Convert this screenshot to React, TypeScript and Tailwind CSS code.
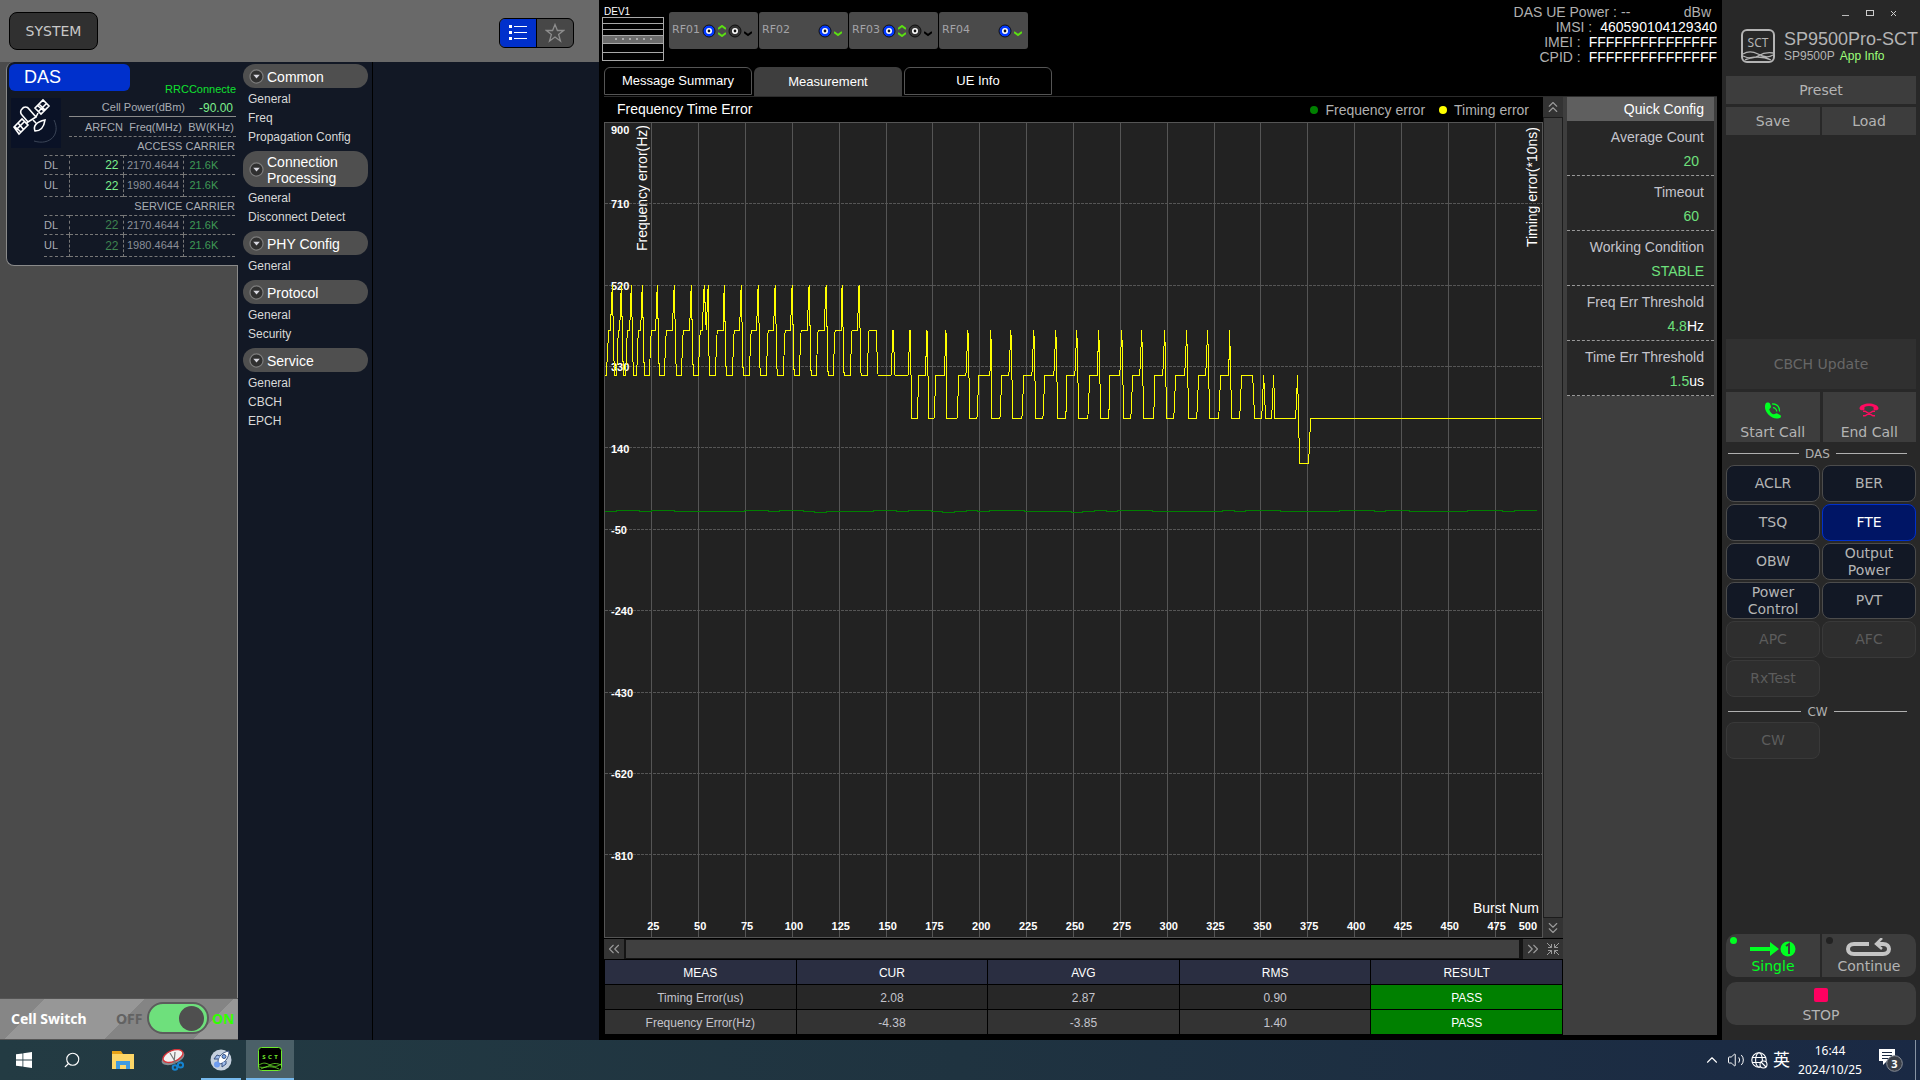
import { useState } from "react";
import type { ReactNode } from "react";
import {
  ChevronUp,
  ChevronsDown,
  ChevronsLeft,
  ChevronsRight,
  ChevronsUp,
  Search,
  Volume2,
} from "lucide-react";

const menu = [
  { title: "Common", items: ["General", "Freq", "Propagation Config"] },
  { title: "Connection Processing", items: ["General", "Disconnect Detect"] },
  { title: "PHY Config", items: ["General"] },
  { title: "Protocol", items: ["General", "Security"] },
  { title: "Service", items: ["General", "CBCH", "EPCH"] },
];

const carriers = [
  {
    name: "ACCESS CARRIER",
    color: "text-[#7df08c]",
    rows: [
      ["DL", "22", "2170.4644", "21.6K"],
      ["UL", "22", "1980.4644", "21.6K"],
    ],
  },
  {
    name: "SERVICE CARRIER",
    color: "text-[#3f8350]",
    rows: [
      ["DL", "22", "2170.4644", "21.6K"],
      ["UL", "22", "1980.4644", "21.6K"],
    ],
  },
];

const rfPorts = [
  { name: "RF01", dual: true },
  { name: "RF02", dual: false },
  { name: "RF03", dual: true },
  { name: "RF04", dual: false },
];

const deviceInfo = [
  ["IMSI", "460590104129340"],
  ["IMEI", "FFFFFFFFFFFFFFF"],
  ["CPID", "FFFFFFFFFFFFFFF"],
];

const results = [
  ["Timing Error(us)", "2.08", "2.87", "0.90", "PASS"],
  ["Frequency Error(Hz)", "-4.38", "-3.85", "1.40", "PASS"],
];

const dasButtons = [
  { label: "ACLR" },
  { label: "BER" },
  { label: "TSQ" },
  { label: "FTE" },
  { label: "OBW" },
  { label: "Output Power" },
  { label: "Power Control" },
  { label: "PVT" },
  { label: "APC", disabled: true },
  { label: "AFC", disabled: true },
  { label: "RxTest", disabled: true },
];

// Timing levels, in plot units from the top
const L5 = 486;
const L4 = 622;
const L3 = 757;
const L2 = 889;
const L1 = 1024;

// One burst cycle: rise from base, shoulder from/to, peak, back on base
const highCycles = [
  [19, 26, 31, 37, 43],
  [50, 55, 59, 64, 70],
  [77, 82, 89, 94, 100],
  [110, 115, 122, 127, 133],
  [148, 154, 167, 172, 178],
  [193, 199, 217, 223, 229],
  [244, 250, 269, 274, 280],
];
const highCycles2 = [
  [346, 352, 370, 373, 379],
  [397, 403, 419, 424, 430],
  [448, 454, 470, 475, 481],
  [499, 505, 521, 526, 532],
  [550, 556, 572, 577, 583],
  [598, 604, 622, 628, 634],
  [649, 655, 673, 679, 685],
  [700, 706, 724, 727, 733],
  [751, 757, 773, 778, 784],
];
const lowCycles = [
  [952, 958, 977, 982, 988],
  [1003, 1009, 1034, 1039, 1042],
  [1072, 1078, 1099, 1105, 1111],
  [1132, 1138, 1171, 1174, 1177],
  [1201, 1207, 1228, 1234, 1240],
  [1267, 1273, 1297, 1303, 1309],
  [1330, 1336, 1363, 1369, 1375],
  [1399, 1402, 1426, 1432, 1438],
  [1465, 1471, 1493, 1498, 1504],
  [1528, 1531, 1561, 1567, 1573],
  [1594, 1600, 1621, 1627, 1633],
  [1663, 1666, 1690, 1696, 1702],
  [1723, 1729, 1756, 1762, 1768],
  [1792, 1798, 1819, 1825, 1831],
  [1858, 1864, 1888, 1891, 1897],
];

const cycle = (base: number, shoulder: number, peak: number) => (c: number[]) =>
  `${c[0]},${base} ${c[1]},${shoulder} ${c[2]},${shoulder} ${c[3]},${peak} ${c[4]},${base}`;

const timingPoints = [
  `15,${L3}`,
  ...highCycles.map(cycle(L3, L4, L5)),
  `295,${L3} 301,${L4} 307,${L4} 313,${L5} 319,${L4} 325,${L5} 328,${L3}`,
  ...highCycles2.map(cycle(L3, L4, L5)),
  `802,${L3} 808,${L4} 829,${L4} 835,${L3}`,
  `874,${L3} 880,${L4} 886,${L3} 925,${L3} 931,${L4} 937,${L2}`,
  ...lowCycles.map(cycle(L2, L3, L4)),
  `1921,${L2} 1927,${L3} 1960,${L3} 1966,${L2}`,
  `1987,${L2} 1993,${L3} 1999,${L2} 2017,${L2} 2023,${L3} 2027,${L2}`,
  `2089,${L2} 2095,${L3} 2101,${L1} 2128,${L1} 2134,${L2} 2826,${L2}`,
].join(" ");

// Frequency error moves in single steps around one level
const frequencyPath = Array.from({ length: 80 }, (_, i) => {
  const wobble = Math.sin(i * 1.7) + Math.sin(i * 0.6);
  const y = wobble > 0.3 ? 1164 : wobble < -1.7 ? 1170 : 1167;
  return `${i === 0 ? "M" : "L"}${15 + i * 35} ${y}H${15 + (i + 1) * 35}`;
}).join("");

const yLabels = [900, 710, 520, 330, 140, -50, -240, -430, -620, -810];
const xLabels = Array.from({ length: 19 }, (_, i) => (i + 1) * 25);

function SctLogo({ className }: { className?: string }) {
  return (
    <svg viewBox="0 0 34 34" fill="none" stroke="currentColor" className={className}>
      <rect x="1" y="1" width="32" height="32" rx="5" strokeWidth="2" />
      <path d="M2 25c5-3 9-3 15 0s10 4 15 1M2 27c6 3 10 3 15 0s9-4 15-3M4 31c7-4 18-4 26 0" strokeWidth="1.3" />
      <text x="17" y="18" textAnchor="middle" fontSize="12" fontFamily="Noto Sans, sans-serif" fill="currentColor" stroke="none">
        SCT
      </text>
    </svg>
  );
}

function Satellite() {
  return (
    <svg viewBox="0 0 50 50" fill="none" stroke="#fff" strokeWidth="1.6" className="h-[50px] w-[50px] bg-[#0a1226]">
      <path d="M24 10l8-8 6 6-8 8zM28 6l6 6M32 10l-4-4M36 5l-8 8M27 8l6 5" />
      <path d="M3 29l8-8 6 6-9 9zM7 25l6 7M5 32l9-9M10 34L3 28" />
      <path d="M17 24l-6-7a4 4 0 0 1 0-6 4 4 0 0 1 7 0l7 8zM25 19l2-4M17 24l-2 2" />
      <path d="M24 33c-2-5 1-9 10-11-1 7-4 11-10 11zM25 25l-3-3" />
      <path d="M43 22c7 14-4 26-20 21" stroke="#3b4557" strokeWidth="1" />
    </svg>
  );
}

function Port({ active }: { active?: boolean }) {
  return (
    <svg viewBox="0 0 14 14" className="-mx-px h-[14px] w-[14px]">
      <circle cx="7" cy="7" r="6" fill={active ? "#0038ff" : "#333"} stroke="#111" strokeWidth="1" />
      <circle cx="7" cy="7" r="2.2" fill="#111" stroke="#fff" strokeWidth="1.6" />
    </svg>
  );
}

function DownMark({ className }: { className: string }) {
  return (
    <svg viewBox="0 0 8 6" className={`h-[6px] w-2 ${className}`} fill="none" stroke="currentColor" strokeWidth="2">
      <path d="M0 1l4 3 4-3" />
    </svg>
  );
}

function UpDownMark() {
  return (
    <svg viewBox="0 0 8 12" className="h-3 w-2 text-[#5be012]" fill="none" stroke="currentColor" strokeWidth="2">
      <path d="M0 4l4-3 4 3M0 8l4 3 4-3" />
    </svg>
  );
}

function RackIcon() {
  return (
    <svg viewBox="0 0 62 44" className="h-[44px] w-[62px]" shapeRendering="crispEdges">
      <rect x="0.5" y="0.5" width="61" height="43" fill="#000" stroke="#a8a8a8" />
      <path d="M1 6.5h60M1 12.5h60M1 26.5h60M1 35.5h60" stroke="#a8a8a8" />
      <rect x="1" y="18" width="60" height="8" fill="#6b6b6b" />
      <path d="M1 18.5h60" stroke="#a8a8a8" />
      <path d="M13 22h2M20 22h2M27 22h2M34 22h2M41 22h2M48 22h2" stroke="#aaa" strokeWidth="2" />
    </svg>
  );
}

function DasCard() {
  return (
    <section className="ml-[6px] rounded-l-lg border-b border-l border-[#8a8a8a] bg-[#121825] pb-[8px] pt-[2px] text-[11px] text-[#a9adb4]">
      <div className="grid grid-cols-[62px_1fr]">
        <button className="col-span-2 ml-[2px] h-[27px] w-[121px] rounded-md bg-[#0030cc] pl-[15px] text-left text-[18px] text-white">
          DAS
        </button>
        <div className="pl-1 pt-[7px]">
          <Satellite />
        </div>
        <div className="-mt-[9px] pr-[2px]">
          <p className="h-[17px] overflow-hidden whitespace-nowrap text-right leading-[14px] text-[#10e030]">RRCConnecte</p>
          <p className="flex h-[18px] items-center justify-end gap-[14px] border-b border-[#8a8a8a] pr-[3px]">
            <span>Cell Power(dBm)</span>
            <span className="text-[12px] text-[#7df08c]">-90.00</span>
          </p>
          <p className="mt-[2px] flex h-[18px] items-center justify-between border-b border-dashed border-[#777] pl-4 pr-[2px]">
            <span>ARFCN</span>
            <span>Freq(MHz)</span>
            <span>BW(KHz)</span>
          </p>
        </div>
      </div>
      {carriers.map((c) => (
        <table key={c.name} className="-mt-px ml-[37px] w-[191px] table-fixed border-collapse first-of-type:-mt-[12px]">
          <caption className="h-[19px] text-right leading-[21px]">{c.name}</caption>
          <colgroup>
            <col className="w-[25px]" />
            <col className="w-[54px]" />
            <col className="w-[60px]" />
            <col />
          </colgroup>
          <tbody>
            {c.rows.map((r) => (
              <tr key={r[0]} className="h-[19px] border-y border-dashed border-[#777] last:h-[22px]">
                <th scope="row" className="text-left font-normal">{r[0]}</th>
                <td className={`border-l border-dashed border-[#777] pr-1 text-right text-[12px] ${c.color}`}>{r[1]}</td>
                <td className="border-x border-dashed border-[#777] text-center text-[#8b8f98]">{r[2]}</td>
                <td className="pl-[6px] text-[#3f9a55]">{r[3]}</td>
              </tr>
            ))}
          </tbody>
        </table>
      ))}
    </section>
  );
}

function CellSwitch() {
  const [on, setOn] = useState(true);
  return (
    <label className="flex h-[42px] cursor-pointer items-center border-y border-[#555] bg-[linear-gradient(135deg,#868686_0_16%,#979797_16%_52%,#848484_52%_84%,#979797_84%)] pb-[2px] pl-[11px] font-['Noto_Sans',sans-serif] text-[14px] font-bold">
      <span className="w-[105px] text-white">Cell Switch</span>
      <span className="w-[31px] text-[#626262]">OFF</span>
      <input type="checkbox" className="peer sr-only" checked={on} onChange={() => setOn(!on)} />
      <span className={`flex h-[32px] w-[62px] items-center rounded-full border-2 border-[#5c5c5c] px-[3px] ${on ? "justify-end bg-[#6ee07c]" : "bg-[#777]"}`}>
        <span className="h-[25px] w-[25px] rounded-full bg-[#4f4f4f]" />
      </span>
      <span className="ml-[3px] text-[#30ff00]">ON</span>
    </label>
  );
}

function LeftPanel() {
  return (
    <aside className="flex w-[599px] shrink-0 flex-col bg-[#121825]">
      <header className="flex h-[62px] shrink-0 items-center justify-between bg-[#696969] pl-[9px] pr-[25px]">
        <button className="h-[38px] w-[89px] rounded-lg border border-black bg-[#303030] font-['DejaVu_Sans',sans-serif] text-[14px] text-[#c8c8c8]">
          SYSTEM
        </button>
        <div className="mt-1 flex h-[30px] w-[75px] overflow-hidden rounded-md border border-black bg-[#474747]">
          <button aria-label="List view" className="flex w-[37px] items-center justify-center border-r border-black bg-[#0030cc]">
            <svg viewBox="0 0 18 16" className="h-4 w-[18px]" fill="#fff" shapeRendering="crispEdges">
              <path d="M0 0h3v3H0zM0 6h3v3H0zM0 12h3v3H0zM5 1h13v1H5zM5 7h13v1H5zM5 13h13v1H5z" />
            </svg>
          </button>
          <button aria-label="Favorites" className="flex flex-1 items-center justify-center">
            <svg viewBox="0 0 20 20" className="h-5 w-5" fill="none" stroke="#8c8c8c" strokeWidth="1.3">
              <path d="M10 1.500l2.400 6h6.100l-4.900 3.900 1.900 6.600-5.500-4-5.500 4 1.900-6.600L1.500 7.500h6.100z" />
            </svg>
          </button>
        </div>
      </header>
      <div className="flex flex-1">
        <div className="flex w-[238px] flex-col bg-[#4b4b4b]">
          <DasCard />
          <div className="flex-1 border-r border-[#8a8a8a]" />
          <CellSwitch />
        </div>
        <nav className="w-[135px] border-r border-black pl-[5px] pr-[4px] pt-[2px]">
          {menu.map((group) => (
            <section key={group.title} className="mb-[4px]">
              <button className="flex min-h-6 w-[125px] items-center gap-[3px] rounded-[14px] bg-[#4f4f4f] pb-px pl-[6px] pt-[3px] text-left text-[14px] leading-[16px] text-white">
                <svg viewBox="0 0 16 16" className="-mt-[2px] h-[15px] w-[15px] shrink-0">
                  <circle cx="8" cy="8" r="7" fill="#303030" stroke="#7c7c7c" strokeWidth="1.300" />
                  <path d="M4.500 6h7L8 10z" fill="#d8d8e0" />
                </svg>
                <span>{group.title}</span>
              </button>
              <ul className="pl-[5px] pt-[2px] text-[12px] leading-[19px] text-[#d8d8d8]">
                {group.items.map((item) => (
                  <li key={item}>
                    <a href="#">{item}</a>
                  </li>
                ))}
              </ul>
            </section>
          ))}
        </nav>
      </div>
    </aside>
  );
}

function Chart() {
  return (
    <div className="relative min-h-0 flex-1 border border-[#555] bg-[#222]">
      <svg viewBox="15 0 2814 2445" preserveAspectRatio="none" className="absolute h-full w-full" fill="none" shapeRendering="crispEdges">
        {Array.from({ length: 19 }, (_, i) => (
          <path key={i} d={`M${15 + (i + 1) * 140.700} 0V2445`} stroke="#555" vectorEffect="non-scaling-stroke" />
        ))}
        {Array.from({ length: 9 }, (_, i) => (
          <path key={i} d={`M15 ${(i + 1) * 244.500 - 2}H2829`} stroke="#555" strokeDasharray="3 1" vectorEffect="non-scaling-stroke" />
        ))}
        <path d={frequencyPath} stroke="#008000" vectorEffect="non-scaling-stroke" />
      </svg>
      <div className="absolute inset-0 text-[11px] font-bold leading-[12px] text-white">
        {yLabels.map((v, i) => (
          <span key={v} className="absolute left-[6px] -translate-y-1/2 first:translate-y-px" style={{ top: `${i * 10}%` }}>
            {v}
          </span>
        ))}
        {xLabels.map((v) => (
          <span key={v} className="absolute bottom-[5px] -translate-x-1/2 pl-[3px]" style={{ left: `${v / 5}%` }}>
            {v}
          </span>
        ))}
        <span className="absolute bottom-[5px] right-[5px]">500</span>
      </div>
      <svg viewBox="15 0 2814 2445" preserveAspectRatio="none" className="absolute h-full w-full" fill="none" shapeRendering="crispEdges">
        <polyline points={timingPoints} stroke="#ffff00" vectorEffect="non-scaling-stroke" />
      </svg>
      <div className="absolute inset-0 text-[14px] leading-4 text-white">
        <span className="absolute left-[29px] top-[2px] rotate-180 [writing-mode:vertical-rl]">Frequency error(Hz)</span>
        <span className="absolute right-[2px] top-[4px] rotate-180 [writing-mode:vertical-rl]">Timing error(*10ns)</span>
        <span className="absolute bottom-[21px] right-[3px]">Burst Num</span>
      </div>
    </div>
  );
}

function ScrollButton({ label, children }: { label: string; children: ReactNode }) {
  return (
    <button aria-label={label} className="flex h-5 w-5 shrink-0 items-center justify-center bg-[#333] text-[#9a9a9a]">
      {children}
    </button>
  );
}

function QuickConfig() {
  const row = "flex h-[55px] flex-col items-end border-b border-dashed border-[#999] pr-[10px] pt-[8px] leading-4";
  const field = "w-16 bg-transparent text-right text-[#6ee07c] outline-none";
  return (
    <form className="ml-[4px] mr-[3px] w-[147px] self-start bg-[#272727] text-[14px] text-[#c4c4cc]">
      <h2 className="h-6 bg-[#5f5f5f] pr-[10px] text-right leading-6 text-white">Quick Config</h2>
      <div className={row}>
        <label htmlFor="avg">Average Count</label>
        <input id="avg" className={`${field} mt-2 pr-[5px]`} defaultValue="20" />
      </div>
      <div className={row}>
        <label htmlFor="timeout">Timeout</label>
        <input id="timeout" className={`${field} mt-2 pr-[5px]`} defaultValue="60" />
      </div>
      <div className={row}>
        <label htmlFor="cond">Working Condition</label>
        <select id="cond" className="mt-2 appearance-none bg-transparent text-right text-[#6ee07c]">
          <option>STABLE</option>
        </select>
      </div>
      <div className={row}>
        <label htmlFor="freq">Freq Err Threshold</label>
        <div className="mt-2 flex text-white">
          <input id="freq" className={field} defaultValue="4.8" />
          <span>Hz</span>
        </div>
      </div>
      <div className={row}>
        <label htmlFor="time">Time Err Threshold</label>
        <div className="mt-2 flex text-white">
          <input id="time" className={field} defaultValue="1.5" />
          <span>us</span>
        </div>
      </div>
    </form>
  );
}

function CenterPanel() {
  const [tab, setTab] = useState("Measurement");
  return (
    <main className="flex min-w-0 flex-1 flex-col bg-black pb-[5px] pl-[5px] pr-[5px]">
      <div className="flex h-[67px] shrink-0 justify-between">
        <div className="flex">
          <div className="-ml-[2px] w-[67px] pt-[6px]">
            <p className="pl-[2px] text-[10px] leading-[11px] text-white">DEV1</p>
            <RackIcon />
          </div>
          <div className="mt-3 flex gap-px">
            {rfPorts.map((p) => (
              <button key={p.name} className="flex h-[37px] w-[89px] items-center justify-between rounded-[3px] bg-[#4a4a4a] pl-[3px] pr-[6px] font-['DejaVu_Sans',sans-serif] text-[11px] text-[#a4a4a8]">
                <span>{p.name}</span>
                <span className="flex items-center gap-[3px]">
                  <Port active />
                  {p.dual && <UpDownMark />}
                  {p.dual && <Port />}
                  <DownMark className={p.dual ? "mt-[6px] text-black" : "mt-[6px] text-[#5be012]"} />
                </span>
              </button>
            ))}
          </div>
        </div>
        <dl className="pt-[5px] text-right text-[14px] leading-[15px] text-[#b0b0b0]">
          <div className="flex justify-end gap-1 pr-[6px]">
            <dt>DAS UE Power :</dt>
            <dd className="flex w-[90px] justify-between">
              <span>--</span>
              <span>dBw</span>
            </dd>
          </div>
          {deviceInfo.map(([k, v]) => (
            <div key={k} className="flex justify-end gap-2">
              <dt>{k} :</dt>
              <dd className="text-white">{v}</dd>
            </div>
          ))}
        </dl>
      </div>
      <div role="tablist" className="flex h-[29px] shrink-0 gap-[2px] text-[13px] text-white">
        {["Message Summary", "Measurement", "UE Info"].map((t) => (
          <button
            key={t}
            role="tab"
            aria-selected={tab === t}
            onClick={() => setTab(t)}
            className={`w-[148px] rounded-t-md ${tab === t ? "bg-[#3e3e3e]" : "mb-px border border-[#555]"}`}
          >
            {t}
          </button>
        ))}
      </div>
      <div className="flex min-h-0 flex-1 border-t border-[#2c2c2c]">
        <div className="flex min-w-0 flex-1 flex-col">
          <div className="flex min-h-0 flex-1">
            <div className="flex min-w-0 flex-1 flex-col">
              <div className="flex h-[25px] shrink-0 items-center justify-between pl-[13px] pr-[14px] text-[14px]">
                <h1 className="text-white">Frequency Time Error</h1>
                <ul className="flex gap-[14px] pt-px text-[#b0b0b0]">
                  <li className="flex items-center gap-[7px]">
                    <span className="h-2 w-2 rounded-full bg-[#008000]" />
                    Frequency error
                  </li>
                  <li className="flex items-center gap-[7px]">
                    <span className="h-2 w-2 rounded-full bg-[#ffff00]" />
                    Timing error
                  </li>
                </ul>
              </div>
              <Chart />
            </div>
            <div className="flex w-5 flex-col gap-px bg-[#1c1c1c]">
              <ScrollButton label="Scroll up">
                <ChevronsUp size={18} strokeWidth={1.5} />
              </ScrollButton>
              <div className="mx-px flex-1 bg-[#404040]" />
              <ScrollButton label="Scroll down">
                <ChevronsDown size={18} strokeWidth={1.5} />
              </ScrollButton>
            </div>
          </div>
          <div className="mt-px flex h-5 shrink-0 gap-[2px] bg-[#141414]">
            <ScrollButton label="Scroll left">
              <ChevronsLeft size={18} strokeWidth={1.5} />
            </ScrollButton>
            <div className="my-px mr-[2px] flex-1 bg-[#404040]" />
            <div className="flex">
              <ScrollButton label="Scroll right">
                <ChevronsRight size={18} strokeWidth={1.5} />
              </ScrollButton>
              <ScrollButton label="Fit to view">
                <svg viewBox="0 0 12 12" className="h-3 w-3" fill="none" stroke="currentColor">
                  <path d="M0 0l4.500 4.500V1M4.500 4.500H1M12 0L7.500 4.500V1M7.500 4.500H11M0 12l4.500-4.500V11M4.500 7.500H1M12 12L7.500 7.500V11M7.500 7.500H11" />
                </svg>
              </ScrollButton>
            </div>
          </div>
          <table className="w-full shrink-0 table-fixed border-separate border-spacing-px bg-black text-center text-[12px]">
            <thead>
              <tr className="h-6 bg-[#2a2e41] text-white">
                {["MEAS", "CUR", "AVG", "RMS", "RESULT"].map((h) => (
                  <th key={h} scope="col" className="pt-px font-normal">{h}</th>
                ))}
              </tr>
            </thead>
            <tbody>
              {results.map((r) => (
                <tr key={r[0]} className="h-6 bg-[#272727] text-[#c4c4cc] last:bg-[#333]">
                  {r.map((v, i) => (
                    <td key={i} className={i === 4 ? "bg-[#008000] pt-px text-white" : "pt-px"}>{v}</td>
                  ))}
                </tr>
              ))}
            </tbody>
          </table>
        </div>
        <div className="flex w-[154px] shrink-0 bg-[#3e3e3e]">
          <QuickConfig />
        </div>
      </div>
    </main>
  );
}

function Divider({ label }: { label: string }) {
  return (
    <div className="flex h-[22px] items-center gap-[6px] pl-[2px] pr-[9px] text-[12px] text-[#b0b0b0]">
      <span className="h-px flex-1 bg-[#b0b0b0]" />
      <span className="pt-px">{label}</span>
      <span className="h-px flex-1 bg-[#b0b0b0]" />
    </div>
  );
}

function RightPanel() {
  const [mode, setMode] = useState("FTE");
  return (
    <aside className="flex w-[198px] shrink-0 flex-col bg-[#282828] px-[4px] pb-[15px] font-['DejaVu_Sans',sans-serif] text-[14px] text-[#b4b4b4]">
      <div className="flex h-[26px] items-center justify-end gap-[17px] pr-[20px]">
        <button aria-label="Minimize" className="mt-[5px] h-px w-[7px] bg-[#bbb]" />
        <button aria-label="Maximize" className="h-[6px] w-[8px] border border-[#ccc]" />
        <button aria-label="Close">
          <svg viewBox="0 0 5 5" className="h-[5px] w-[5px]" stroke="#ccc">
            <path d="M0 0l5 5M5 0L0 5" />
          </svg>
        </button>
      </div>
      <div className="flex h-[50px] gap-[9px] whitespace-nowrap pl-[15px] pt-[3px] font-['Liberation_Sans',Arial,sans-serif]">
        <SctLogo className="h-[34px] w-[34px] shrink-0" />
        <div>
          <p className="text-[18px] leading-5">SP9500Pro-SCT</p>
          <p className="flex gap-[5px] text-[12px] leading-[14px]">
            SP9500P <a href="#" className="text-[#9dff7a]">App Info</a>
          </p>
        </div>
      </div>
      <div className="grid grid-cols-2 gap-x-[2px] gap-y-[3px]">
        <button className="col-span-2 h-7 bg-[#3d3d3d]">Preset</button>
        <button className="h-7 bg-[#3d3d3d]">Save</button>
        <button className="h-7 bg-[#3d3d3d]">Load</button>
      </div>
      <div className="mt-[204px] grid grid-cols-2 gap-x-[3px] gap-y-[3px]">
        <button disabled className="col-span-2 h-[50px] bg-[#303030] text-[#676767]">CBCH Update</button>
        <button className="flex h-[50px] flex-col items-center justify-end gap-[3px] bg-[#3d3d3d] leading-[20px]">
          <svg viewBox="0 0 18 18" className="h-[17px] w-[18px]" fill="#0f2">
            <path d="M1 2c1-2 4-2 5 0l1 3c0 1-2 2-2 3 1 3 3 5 5 5 1 0 2-1 3-1l4 2c1 1 0 3-1 3C8 20-2 10 1 2z" />
            <path d="M9 6c2 0 4 2 4 4M8 2c5 0 8 3 8 8" fill="none" stroke="#0f2" strokeWidth="1.3" />
          </svg>
          Start Call
        </button>
        <button className="flex h-[50px] flex-col items-center justify-end gap-[3px] bg-[#3d3d3d] leading-[20px]">
          <svg viewBox="0 0 20 17" className="h-[17px] w-5" fill="#ff0a60">
            <path d="M0.500 6C2 0 18 0 19.500 6c0.500 2.500-4.500 3-5 1.200V5C12 3.800 8 3.800 5.500 5v2.200C5 9 0 8.500 0.500 6z" />
            <path d="M4 9.200h2l8 4.600h2M16 9.200h-2l-8 4.600H4" fill="none" stroke="#ff0a60" strokeWidth="1.5" />
          </svg>
          End Call
        </button>
      </div>
      <Divider label="DAS" />
      <div className="mt-px grid grid-cols-2 gap-[2px]">
        {dasButtons.map((b) => (
          <button
            key={b.label}
            disabled={b.disabled}
            onClick={() => setMode(b.label)}
            className={`h-[37px] rounded-lg border px-3 leading-[17px] ${
              b.disabled
                ? "border-[#393939] bg-[#2e2e2e] text-[#5c5c5c]"
                : mode === b.label
                  ? "border-[#0030cc] bg-[#001565] text-white"
                  : "border-[#4c4c4c] bg-[#121825]"
            }`}
          >
            {b.label}
          </button>
        ))}
      </div>
      <div className="mt-[3px]">
        <Divider label="CW" />
        <div className="grid grid-cols-2 gap-[2px]">
          <button disabled className="h-[37px] rounded-lg border border-[#393939] bg-[#2e2e2e] text-[#5c5c5c]">CW</button>
        </div>
      </div>
      <div className="mt-auto grid grid-cols-2 gap-x-[2px] gap-y-[5px]">
        <button className="relative flex h-[43px] flex-col items-center rounded-l-[10px] bg-[#3d3d3d] pt-[7px] leading-[19px] text-[#0f2]">
          <span className="absolute left-1 top-[3px] h-[7px] w-[7px] rounded-full bg-[#0f2]" />
          <svg viewBox="0 0 46 16" className="h-4 w-[46px] shrink-0" fill="currentColor">
            <path d="M0 6h20V1l9 7-9 7v-5H0z" />
            <circle cx="38" cy="8" r="7.500" />
            <path d="M36 5l3-2v10" stroke="#3d3d3d" strokeWidth="2" fill="none" />
          </svg>
          Single
        </button>
        <button className="relative flex h-[43px] flex-col items-center rounded-r-[10px] bg-[#3d3d3d] pt-[4px] leading-[19px]">
          <span className="absolute left-1 top-[3px] h-[7px] w-[7px] rounded-full bg-[#222]" />
          <svg viewBox="0 0 46 19" className="h-[19px] w-[46px] shrink-0" fill="none" stroke="#c4c4c4" strokeWidth="4">
            <path d="M23 6H8c-8 0-8 10 0 10h29c8 0 8-10 0-10h-5" />
            <path d="M36 0l-6 6 6 5" strokeWidth="2.500" />
          </svg>
          Continue
        </button>
        <button className="col-span-2 flex h-[43px] flex-col items-center rounded-[10px] bg-[#3d3d3d] pt-[6px]">
          <span className="h-[14px] w-[14px] rounded-[2px] bg-[#ff0060]" />
          <span className="mt-1 leading-[18px]">STOP</span>
        </button>
      </div>
    </aside>
  );
}

function Taskbar() {
  return (
    <footer className="flex h-10 shrink-0 items-center justify-between bg-[linear-gradient(90deg,#233b43,#1f3340_50%,#1a2944)] font-['Noto_Sans','Noto_Sans_CJK_SC',sans-serif] text-[12px] text-white">
      <div className="flex h-full items-center">
        <button aria-label="Start" className="flex h-full w-12 items-center justify-center">
          <svg viewBox="0 0 16 16" className="h-4 w-4" fill="#fff">
            <path d="M0 2.300L6.500 1.400v6.200H0zM7.300 1.300L16 0v7.600H7.300zM0 8.400h6.500v6.200L0 13.700zM7.300 8.400H16V16l-8.700-1.300z" />
          </svg>
        </button>
        <button aria-label="Search" className="flex h-full w-12 items-center justify-center">
          <Search size={18} strokeWidth={1.5} className="-scale-x-100" />
        </button>
        <button aria-label="Files" className="flex h-full w-[54px] items-center justify-center">
          <svg viewBox="0 0 22 19" className="h-[19px] w-[22px]">
            <path d="M0 0h9l2 3h11v15H0z" fill="#e8a317" />
            <path d="M0 3h22v15H0z" fill="#fdd667" />
            <path d="M4 18v-8h14v8h-4v-4H8v4z" fill="#3f9be0" />
          </svg>
        </button>
        <button aria-label="Snip" className="flex h-full w-[46px] items-center justify-center">
          <svg viewBox="0 0 24 22" className="h-[22px] w-6">
            <ellipse cx="12" cy="9" rx="12" ry="6" fill="#8a8f94" transform="rotate(-22 12 9)" />
            <ellipse cx="12" cy="7" rx="10.500" ry="5.500" fill="#f2f2f2" stroke="#d8343a" strokeWidth="1.400" transform="rotate(-22 12 7)" />
            <path d="M9 4l6 10M14 3l-1 12" stroke="#777" strokeWidth="1.200" />
            <circle cx="14" cy="18.500" r="2.300" fill="none" stroke="#1583d0" strokeWidth="2" />
            <circle cx="19.500" cy="16" r="2.600" fill="none" stroke="#1583d0" strokeWidth="2" />
          </svg>
        </button>
        <button aria-label="Launcher" className="ml-[5px] flex h-full w-10 items-center justify-center border-b-2 border-[#76b9ed]">
          <svg viewBox="0 0 22 22" className="mt-[2px] h-[22px] w-[22px]">
            <circle cx="11" cy="11" r="10.500" fill="#c5d0de" />
            <path d="M8 13C8 7 13 3 19 2c0 6-3 11-9 13z" fill="#fff" stroke="#39517e" />
            <circle cx="14" cy="7.500" r="2" fill="#7da6e8" stroke="#39517e" />
            <path d="M8 10H4l3-4 3 1M12 14v4l4-3v-3" fill="#9ebcec" stroke="#39517e" />
            <circle cx="7" cy="15.500" r="3" fill="#6f9cf0" />
          </svg>
        </button>
        <button aria-label="SCT" className="ml-[5px] flex h-full w-12 items-center justify-center border-b-2 border-[#76b9ed] bg-[#4b6068]">
          <svg viewBox="0 0 24 24" className="h-6 w-6" fill="none" stroke="#6fea2c">
            <rect x="0.500" y="0.500" width="23" height="23" rx="3" fill="#000" />
            <path d="M1 18c5-3 7-2 11 0s7 2 11-1M1 20c5 1 8 0 11-2s7-2 11 0M3 22c5-3 12-3 18 0" strokeWidth="0.800" />
            <g fontSize="6" fontWeight="bold" fill="#6fea2c" stroke="none" textAnchor="middle">
              <text x="6" y="12">S</text>
              <text x="12" y="12">C</text>
              <text x="18" y="12">T</text>
            </g>
          </svg>
        </button>
      </div>
      <div className="flex h-full items-center">
        <ChevronUp size={18} strokeWidth={1.5} className="mr-[6px]" />
        <Volume2 size={18} strokeWidth={1.3} className="mr-[6px]" />
        <svg viewBox="0 0 17 17" className="mr-[5px] h-[17px] w-[17px]" fill="none" stroke="#fff" strokeWidth="1.100">
          <circle cx="8" cy="8" r="7.200" />
          <ellipse cx="8" cy="8" rx="3.400" ry="7.200" />
          <path d="M1 5.500h14M1 10.500h14" />
          <circle cx="12.500" cy="12.500" r="3.500" fill="#1b2b43" />
          <path d="M10 10l5 5" />
        </svg>
        <span className="mr-[5px] text-[17px]">英</span>
        <time className="mr-[14px] w-[70px] text-center leading-[19px]">
          16:44
          <br />
          2024/10/25
        </time>
        <button aria-label="Notifications" className="mr-3">
          <svg viewBox="0 0 24 24" className="h-6 w-6">
            <path d="M0 1h16v12H8l-4 4v-4H0z" fill="#fff" />
            <path d="M3 4.500h10M3 7.500h10M3 10.500h7" stroke="#1b2b43" />
            <circle cx="15.500" cy="15.500" r="7.800" fill="#3a3f48" stroke="#8a8f98" />
            <text x="15.500" y="19.500" textAnchor="middle" fontSize="11" fontWeight="bold" fill="#fff">3</text>
          </svg>
        </button>
        <span className="mr-1 h-full w-px bg-[#8793a3]" />
      </div>
    </footer>
  );
}

export default function App() {
  return (
    <div className="flex min-h-screen flex-col bg-black font-['Liberation_Sans',Arial,sans-serif]">
      <div className="flex flex-1">
        <LeftPanel />
        <CenterPanel />
        <RightPanel />
      </div>
      <Taskbar />
    </div>
  );
}
